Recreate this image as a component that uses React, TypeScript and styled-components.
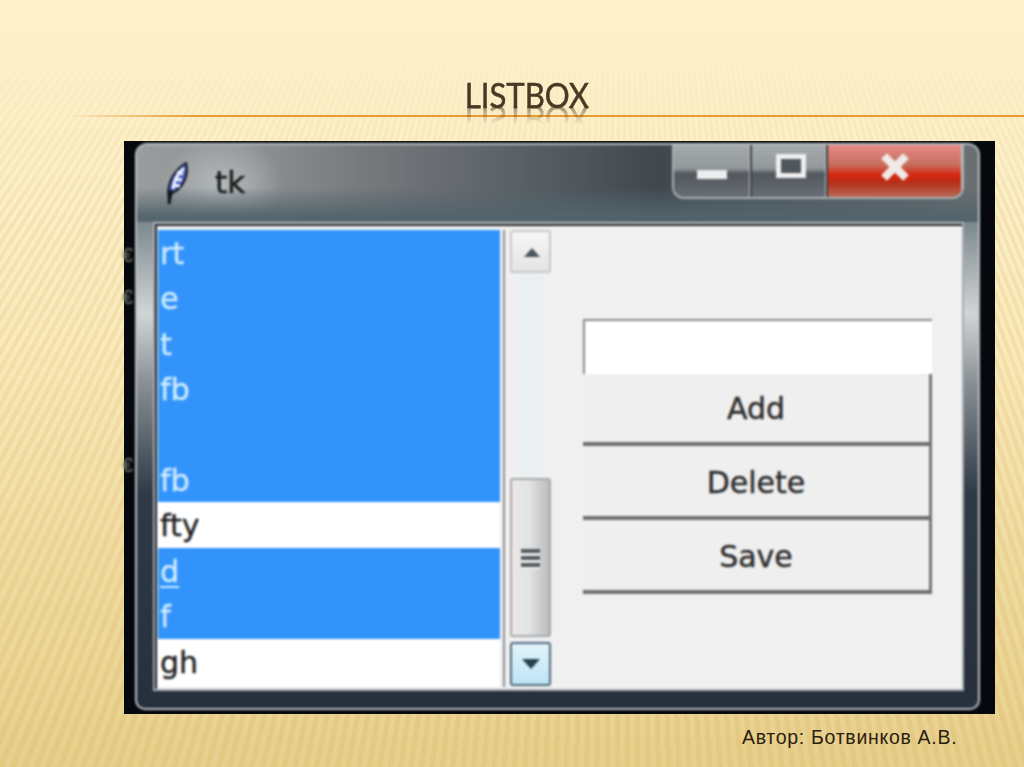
import React from 'react'
import styled, { createGlobalStyle } from 'styled-components'

const GlobalStyle = createGlobalStyle`
  html, body {
    margin: 0;
    padding: 0;
    background: #f5e3ad;
  }
`

const Slide = styled.div`
  position: relative;
  width: 1024px;
  height: 767px;
  overflow: hidden;
  background: linear-gradient(180deg, #fdf1ca 0%, #fcefc6 24%, #f9e8b8 45%, #efd99b 75%, #e6cd88 100%);

  &::before {
    content: '';
    position: absolute;
    inset: 0;
    background: repeating-conic-gradient(
      from 150deg at 620px -700px,
      rgba(214, 176, 92, 0.16) 0deg 0.2deg,
      rgba(255, 255, 255, 0.05) 0.2deg 0.4deg
    );
    -webkit-mask-image: linear-gradient(180deg, transparent 36px, #000 210px);
    mask-image: linear-gradient(180deg, transparent 36px, #000 210px);
  }
`

const Content = styled.div`
  position: relative;
  display: flex;
  flex-direction: column;
`

const Header = styled.div`
  display: flex;
  justify-content: center;
  align-items: flex-end;
  height: 108px;
  padding-left: 29px;
`

const Title = styled.h1`
  margin: 0;
  font-family: 'Lato', 'Liberation Sans', sans-serif;
  font-weight: 400;
  font-size: 34px;
  line-height: 26px;
  color: #4a3725;
  -webkit-text-stroke: 0.5px #4a3725;
  transform: scaleX(0.915);
  -webkit-box-reflect: below -2px linear-gradient(transparent 30%, rgba(0, 0, 0, 0.55));
`

const Rule = styled.div`
  height: 2px;
  margin: 7px 0 0 65px;
  background: linear-gradient(90deg, rgba(232, 150, 40, 0) 0%, #e99a30 14%, #e99a30 100%);
`

const Shot = styled.div`
  position: relative;
  width: 845px;
  height: 567px;
  margin: 24px 0 0 124px;
  padding: 2px 15px 4px 11px;
  background: #05080d;
`

const StrayGlyph = styled.span<{ $top: number }>`
  position: absolute;
  left: -2px;
  top: ${(p) => p.$top}px;
  width: 11px;
  overflow: hidden;
  font-family: 'Liberation Sans', sans-serif;
  font-size: 20px;
  line-height: 20px;
  color: #76806c;
  filter: blur(0.8px);
`

const Window = styled.div`
  display: flex;
  flex-direction: column;
  height: 100%;
  box-sizing: border-box;
  border: 2px solid #b9bfc2;
  border-radius: 12px 12px 10px 10px;
  filter: blur(0.9px);
  background: linear-gradient(
    180deg,
    #7c8589 0%,
    #7d8a8f 14%,
    #d2d5d6 30%,
    #8a9196 42%,
    #2f3a46 62%,
    #27303c 100%
  );
`

const TitleBar = styled.div`
  display: flex;
  align-items: flex-start;
  height: 77px;
  background:
    linear-gradient(180deg, rgba(90, 105, 112, 0) 55%, rgba(82, 100, 108, 0.95) 92%),
    radial-gradient(ellipse 60px 50px at 85px 40px, #b4babc 0%, rgba(178, 184, 186, 0) 100%),
    linear-gradient(90deg, #9a9d9e 0%, #8e9192 14%, #787b7e 26%, #5c6268 44%, #40484f 62%, #4d5359 70%, #6b7073 100%);
  border-radius: 10px 10px 0 0;
`

const AppIcon = styled.svg`
  width: 28px;
  height: 46px;
  margin: 15px 0 0 26px;
`

const AppTitle = styled.span`
  margin: 17px 0 0 24px;
  font-family: 'DejaVu Sans', sans-serif;
  font-size: 31px;
  line-height: 40px;
  color: #1b201d;
  -webkit-text-stroke: 0.6px #1b201d;
`

const CaptionButtons = styled.div`
  display: flex;
  height: 52px;
  margin-left: auto;
  margin-right: 14px;
  border: 2px solid #aab1b4;
  border-top: none;
  border-radius: 0 0 12px 12px;
  overflow: hidden;
`

const CaptionButton = styled.div<{ $width: number; $danger?: boolean }>`
  display: flex;
  align-items: center;
  justify-content: center;
  box-sizing: border-box;
  width: ${(p) => p.$width}px;
  border-right: ${(p) => (p.$danger ? 'none' : '2px solid #3a3f44')};
  box-shadow: inset -1px 0 0 #c2c6c8;
  background: ${(p) =>
    p.$danger
      ? 'linear-gradient(180deg, #e78a85 0%, #c6705f 38%, #d8240f 58%, #b52f1a 72%, #b96a55 100%)'
      : 'linear-gradient(180deg, #a6abac 0%, #92979a 45%, #53585f 55%, #686e74 100%)'};
`

const MinimizeGlyph = styled.div`
  width: 30px;
  height: 9px;
  margin-top: 6px;
  background: #eceef0;
`

const MaximizeGlyph = styled.div`
  box-sizing: border-box;
  width: 30px;
  height: 24px;
  margin: 0 0 11px 3px;
  border: 5px solid #eef0f2;
  background: #4f565c;
`

const CloseGlyph = styled.svg`
  width: 32px;
  height: 28px;
  margin-bottom: 8px;
`

const Client = styled.div`
  flex: 1;
  display: flex;
  min-height: 0;
  margin: 0 14px 17px 16px;
  padding: 6px 0 2px 3px;
  background: #f0f0f0;
  border: 2px solid #a5abb0;
  border-top-color: #b8bdc0;
  box-shadow: inset 2px 2px 0 #1d2328;
`

const ListBox = styled.div`
  display: flex;
  flex-direction: column;
  width: 342px;
  background: #fff;
`

const Row = styled.div<{ $selected?: boolean; $active?: boolean }>`
  height: 45.4px;
  padding-left: 2px;
  font-family: 'DejaVu Sans', sans-serif;
  font-size: 30px;
  line-height: 47px;
  color: ${(p) => (p.$selected ? '#cdeaff' : '#222')};
  background: ${(p) => (p.$selected ? '#3294fb' : '#fff')};
  -webkit-text-stroke: 0.4px ${(p) => (p.$selected ? '#cdeaff' : '#222')};
  text-decoration: ${(p) => (p.$active ? 'underline' : 'none')};
  text-underline-offset: 4px;
  text-decoration-thickness: 2px;
`

const ScrollBar = styled.div`
  display: flex;
  flex-direction: column;
  width: 47px;
  margin-left: 3px;
  padding: 0 1px 1px 5px;
  box-sizing: border-box;
  border-left: 2px solid #8a8f94;
  background: linear-gradient(90deg, #f4f0ee, #e9eff3 50%, #f0f0f0);
`

const ScrollArrow = styled.div<{ $hot?: boolean }>`
  display: flex;
  align-items: center;
  justify-content: center;
  box-sizing: border-box;
  width: 41px;
  height: ${(p) => (p.$hot ? '44px' : '43px')};
  margin-top: ${(p) => (p.$hot ? '5px' : '0')};
  border: 2px solid ${(p) => (p.$hot ? '#51697c' : '#c8c8c8')};
  border-radius: 3px;
  background: ${(p) =>
    p.$hot ? 'linear-gradient(180deg, #e3f4fb, #bfe4f5)' : 'linear-gradient(180deg, #f6f6f6, #e4e4e4)'};
`

const ArrowGlyph = styled.svg`
  width: 18px;
  height: 10px;
`

const ScrollThumb = styled.div`
  display: flex;
  flex-direction: column;
  align-items: center;
  justify-content: center;
  gap: 3px;
  box-sizing: border-box;
  width: 41px;
  height: 159px;
  margin-top: auto;
  border: 2px solid #a8a8a8;
  border-radius: 3px;
  background: linear-gradient(90deg, #ece8e6 0%, #e2e4e6 45%, #bcbcbc 100%);
`

const GripLine = styled.div`
  width: 19px;
  height: 4px;
  background: #55595c;
  box-shadow: 0 2px 0 #f2f2f2;
`

const FormPanel = styled.div`
  flex: 1;
  padding: 89px 30px 0 33px;
`

const EntryField = styled.div`
  box-sizing: border-box;
  height: 55px;
  background: #fff;
  border-top: 2px solid #8a8a8a;
  border-left: 2px solid #8a8a8a;
`

const ActionButton = styled.div`
  display: flex;
  align-items: center;
  justify-content: center;
  box-sizing: border-box;
  height: 72px;
  background: #efefef;
  border-right: 3px solid #747474;
  border-bottom: 4px solid #6f6f6f;
  font-family: 'DejaVu Sans', sans-serif;
  font-size: 30px;
  color: #2b2b2b;
  -webkit-text-stroke: 0.4px #2b2b2b;

  & + & {
    height: 74px;
    padding-top: 3px;
  }
`

const Footer = styled.div`
  margin: 11px 0 0 742px;
  font-family: 'Liberation Sans', sans-serif;
  font-size: 19.5px;
  line-height: 24px;
  letter-spacing: 0.7px;
  color: #2b1e10;
`

const rows = [
  { text: 'rt', selected: true },
  { text: 'e', selected: true },
  { text: 't', selected: true },
  { text: 'fb', selected: true },
  { text: '', selected: true },
  { text: 'fb', selected: true },
  { text: 'fty', selected: false },
  { text: 'd', selected: true, active: true },
  { text: 'f', selected: true },
  { text: 'gh', selected: false },
]

const App: React.FC = () => {
  return (
    <Slide>
      <GlobalStyle />
      <Content>
        <Header>
          <Title>LISTBOX</Title>
        </Header>
        <Rule />
        <Shot>
          <StrayGlyph $top={104}>€</StrayGlyph>
          <StrayGlyph $top={146}>€</StrayGlyph>
          <StrayGlyph $top={314}>€</StrayGlyph>
          <Window>
            <TitleBar>
              <AppIcon viewBox="0 0 28 46">
                <path d="M6 40 C3 28 8 12 23 3 C26 14 21 28 9 33 Z" fill="#4a5fb8" stroke="#14192e" strokeWidth="2" />
                <path d="M10 29 C11 20 15 13 21 8 M11 19 L19 20 M10 25 L17 26 M14 12 L20 14" stroke="#eef3ff" strokeWidth="3" fill="none" />
                <path d="M8 30 L6 44" stroke="#10131c" strokeWidth="3" fill="none" />
              </AppIcon>
              <AppTitle>tk</AppTitle>
              <CaptionButtons>
                <CaptionButton $width={78}>
                  <MinimizeGlyph />
                </CaptionButton>
                <CaptionButton $width={76}>
                  <MaximizeGlyph />
                </CaptionButton>
                <CaptionButton $width={134} $danger>
                  <CloseGlyph viewBox="0 0 32 28">
                    <path d="M5 3 L27 25 M27 3 L5 25" stroke="#f0ebe6" strokeWidth="8" fill="none" />
                  </CloseGlyph>
                </CaptionButton>
              </CaptionButtons>
            </TitleBar>
            <Client>
              <ListBox>
                {rows.map((row, i) => (
                  <Row key={i} $selected={row.selected} $active={row.active}>
                    {row.text}
                  </Row>
                ))}
              </ListBox>
              <ScrollBar>
                <ScrollArrow>
                  <ArrowGlyph viewBox="0 0 18 10">
                    <path d="M10 1 L18 10 L2 10 Z" fill="#4a545c" />
                  </ArrowGlyph>
                </ScrollArrow>
                <ScrollThumb>
                  <GripLine />
                  <GripLine />
                  <GripLine />
                </ScrollThumb>
                <ScrollArrow $hot>
                  <ArrowGlyph viewBox="0 0 18 10">
                    <path d="M0 0 L18 0 L9 10 Z" fill="#27414f" />
                  </ArrowGlyph>
                </ScrollArrow>
              </ScrollBar>
              <FormPanel>
                <EntryField />
                <ActionButton>Add</ActionButton>
                <ActionButton>Delete</ActionButton>
                <ActionButton>Save</ActionButton>
              </FormPanel>
            </Client>
          </Window>
        </Shot>
        <Footer>Автор: Ботвинков А.В.</Footer>
      </Content>
    </Slide>
  )
}

export default App
